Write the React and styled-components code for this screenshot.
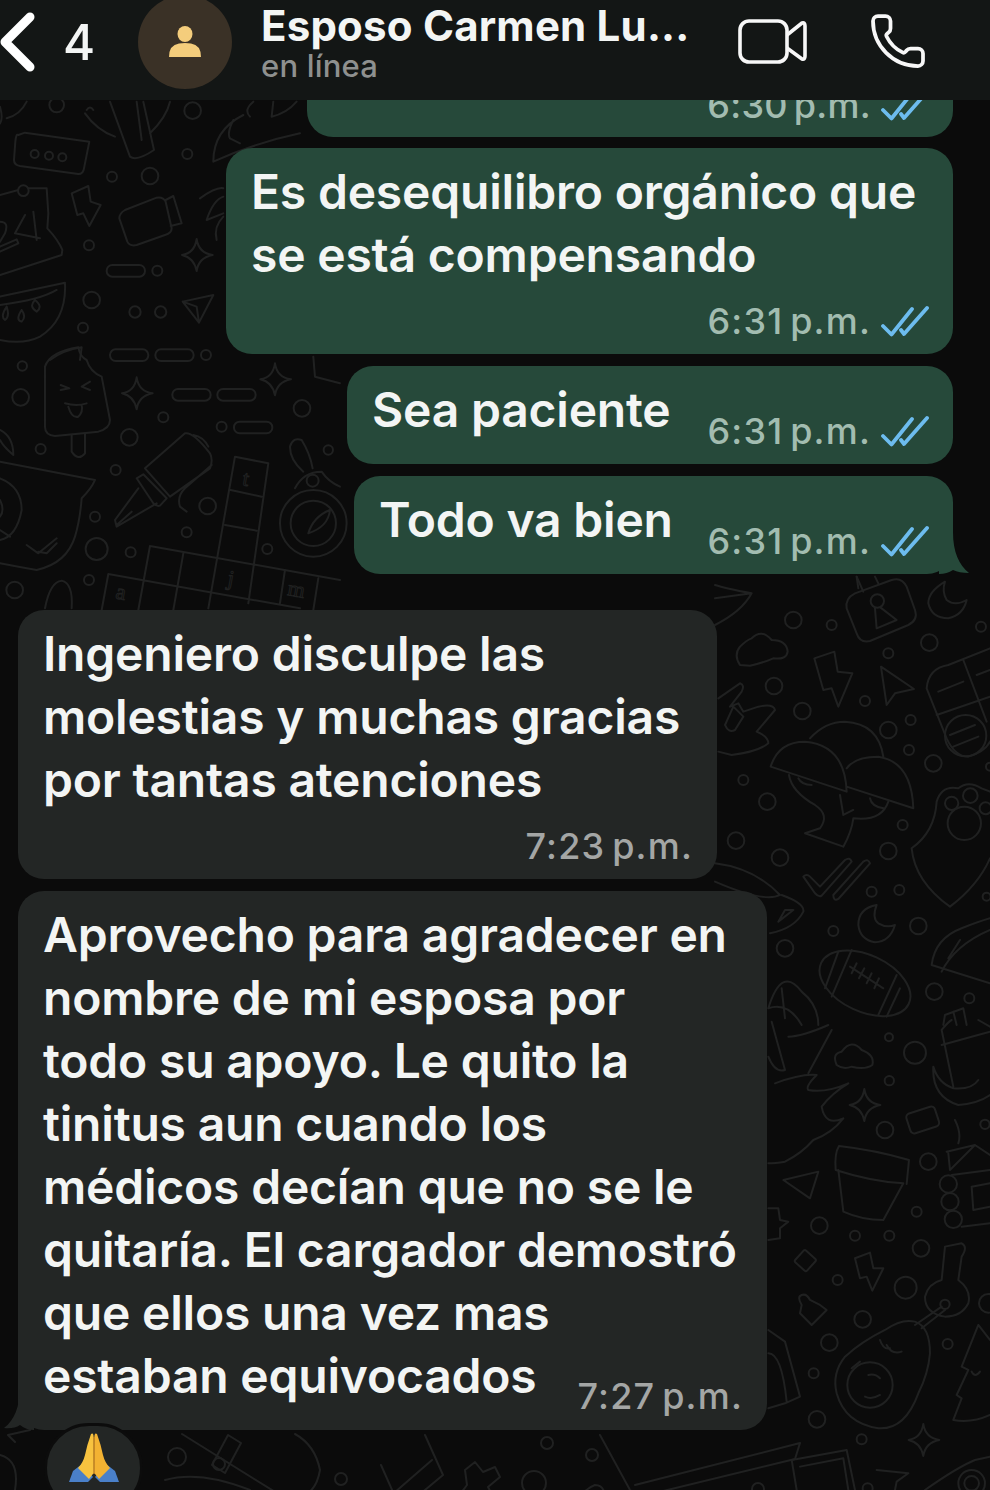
import React from "react";
import styled, { createGlobalStyle } from "styled-components";
import { Phone } from "lucide-react";

const Global = createGlobalStyle`
  html, body { margin: 0; padding: 0; background: #0b0b0b; }
  body { font-family: Inter, "Liberation Sans", sans-serif; }
`;

const Page = styled.div`
  position: relative;
  width: 990px;
  height: 1490px;
  overflow: hidden;
  background: #0b0b0b;
  color: #f3f5f4;
`;

const Wallpaper = styled.svg`
  position: absolute;
  inset: 0;
  width: 990px;
  height: 1490px;
`;

const Header = styled.header`
  position: relative;
  z-index: 2;
  display: flex;
  align-items: flex-start;
  height: 100px;
  background: #131615;
`;

const BackGroup = styled.div`
  display: flex;
  align-items: center;
  width: 138px;
  height: 84px;
`;

const BackCount = styled.span`
  margin-left: 27px;
  font-size: 49px;
  font-weight: 500;
  line-height: 1;
`;

const Avatar = styled.div`
  flex: none;
  display: flex;
  align-items: center;
  justify-content: center;
  width: 94px;
  height: 94px;
  margin-top: -5px;
  border-radius: 50%;
  background: #3a3126;
`;

const Titles = styled.div`
  width: 477px;
  margin-left: 29px;
  padding-top: 3px;
`;

const Title = styled.div`
  font-size: 42px;
  font-weight: 700;
  line-height: 45px;
  letter-spacing: 0.2px;
  white-space: nowrap;
`;

const Status = styled.div`
  font-size: 31px;
  font-weight: 500;
  line-height: 36px;
  color: #8e908f;
  letter-spacing: 0.2px;
`;

const Actions = styled.div`
  display: flex;
  align-items: center;
  gap: 60px;
  height: 82px;
  color: #f7f7f7;
`;

const Chat = styled.main`
  position: relative;
  z-index: 1;
  display: flex;
  flex-direction: column;
  gap: 12px;
  padding: 0 37px 0 18px;
`;

const Bubble = styled.div`
  position: relative;
  box-sizing: border-box;
  width: ${(p) => p.$w}px;
  align-self: ${(p) => (p.$out ? "flex-end" : "flex-start")};
  margin-top: ${(p) => p.$mt || 0}px;
  padding: 12px 24px 20px 25px;
  border-radius: 26px;
  background: ${(p) => (p.$out ? "#26493a" : "#232625")};

  ${(p) =>
    p.$tail &&
    p.$out &&
    `&::after {
      content: "";
      position: absolute;
      right: -16px;
      bottom: 0;
      width: 30px;
      height: 42px;
      background: #26493a;
      clip-path: path("M14 0 C14 20 20 33 30 41 Q20 41 14 38 Q8 42 0 42 L0 0 Z");
    }`}

  ${(p) =>
    p.$tail &&
    !p.$out &&
    `&::after {
      content: "";
      position: absolute;
      left: -14px;
      bottom: 0;
      width: 30px;
      height: 42px;
      background: #232625;
      clip-path: path("M16 0 C16 18 10 33 0 40 Q10 41 16 37 Q22 42 30 42 L30 0 Z");
    }`}
`;

const ClippedBubble = styled.div`
  box-sizing: border-box;
  display: flex;
  justify-content: flex-end;
  align-items: flex-end;
  align-self: flex-end;
  width: 646px;
  height: 37px;
  margin-bottom: -1px;
  padding: 0 24px 14px 0;
  overflow: hidden;
  border-radius: 0 0 26px 26px;
  background: #26493a;
`;

const Body = styled.div`
  font-size: 48px;
  font-weight: 600;
  line-height: 63px;
  letter-spacing: -0.2px;
  white-space: nowrap;
`;

const Meta = styled.div`
  display: flex;
  flex: none;
  align-items: center;
  justify-content: flex-end;
  gap: 10px;
  height: 36px;
  color: ${(p) => (p.$out ? "#a2bcb0" : "#a4a6a5")};
  font-size: 36px;
  font-weight: 500;
  line-height: 36px;
  letter-spacing: 1.2px;
  word-spacing: -4px;
  white-space: nowrap;
`;

const ClippedMeta = styled(Meta)`
  letter-spacing: 0.3px;
`;

const MetaRow = styled(Meta)`
  margin-top: 17px;
  margin-bottom: -5px;
`;

const Inline = styled.div`
  display: flex;
  align-items: flex-end;
  justify-content: space-between;
  margin-bottom: 3px;
`;

const InlineMeta = styled(Meta)`
  margin-bottom: -8px;
`;

const Overlay = styled.div`
  display: grid;
  margin-bottom: 3px;
  & > * {
    grid-area: 1 / 1;
  }
`;

const OverlayMeta = styled(Meta)`
  align-self: end;
  justify-self: end;
  margin-bottom: -7px;
`;

const Reaction = styled.div`
  position: relative;
  z-index: 2;
  align-self: flex-start;
  display: flex;
  justify-content: center;
  box-sizing: border-box;
  width: 99px;
  height: 90px;
  margin: -19px 0 0 26px;
  padding-top: 7px;
  border: 3px solid #0c0c0c;
  border-radius: 48px;
  background: #232625;
`;

const Stroke = styled.g`
  fill: none;
  stroke: #202121;
  stroke-width: ${(p) => p.$sw || 6};
  stroke-linecap: round;
  stroke-linejoin: round;
`;

const Letter = styled.text`
  font-family: "Liberation Serif", serif;
  font-size: 66px;
  fill: none;
  stroke: #202121;
  stroke-width: 3;
`;

const Circles = ({ list }) =>
  list.map(([x, y, r], i) => <circle key={i} cx={x} cy={y} r={r} />);

const Pills = ({ list }) =>
  list.map(([x, y], i) => <rect key={i} x={x} y={y} width="115" height="35" rx="17" />);

const Region = ({ x, y, children }) => (
  <Stroke transform={`translate(${x} ${y}) scale(0.3333)`}>{children}</Stroke>
);

const star = (x, y, s = 1) =>
  `M${x} ${y - 48 * s} Q${x + 6 * s} ${y - 6 * s} ${x + 48 * s} ${y} Q${x + 6 * s} ${y + 8 * s} ${x} ${y + 48 * s} Q${x - 8 * s} ${y + 8 * s} ${x - 44 * s} ${y} Q${x - 6 * s} ${y - 6 * s} ${x} ${y - 48 * s}Z`;

const Doodles = () => (
  <Wallpaper viewBox="0 0 990 1490" aria-hidden="true">
    {/* top left */}
    <Region x={0} y={100}>
      <path d="M55 105 Q48 100 46 125 L42 180 Q42 195 60 198 L235 222 Q250 222 252 205 L268 125 L75 98Z" />
      <Circles list={[[104,162,12],[147,167,12],[187,172,12],[170,15,22],[578,32,25],[562,162,15],[336,230,15],[450,228,25],[267,436,15],[472,512,15],[275,600,25],[405,636,17],[482,636,17],[249,683,15],[70,272,16]]} />
      <path d="M330 5 L390 170 Q410 185 462 150 L430 5 M255 40 Q290 90 345 110 M450 100 Q500 50 510 5 M410 5 L425 120" />
      <path d="M260 30 Q270 15 280 30 M0 20 Q10 55 0 70 M20 55 Q60 45 80 5" />
      <path d="M640 185 Q640 90 730 45 M640 185 Q760 130 900 100 M700 60 Q680 100 690 115 L720 130 M760 5 Q730 30 750 50 M820 5 L815 50 Q860 40 890 5" />
      <path d="M215 280 L265 258 L272 305 L302 315 L268 378 L250 340 L232 345Z" />
      <path d="M358 355 Q358 340 375 330 L470 293 Q490 290 497 305 L515 385 Q515 400 495 405 L410 435 Q390 440 382 425Z M497 300 L520 288 L545 370 L512 378" />
      <path d={star(590, 465, 1)} />
      <path d="M548 605 L640 585 L597 668Z M597 668 L590 620 L548 605" />
      <rect x="320" y="495" width="115" height="35" rx="17" />
      <path d="M0 285 L55 270 M85 265 L140 265 L145 340 L142 385 Q175 420 187 450 L185 465 L0 525 M0 455 L55 430 L50 418 L0 440" />
      <path d="M75 345 L45 400 L120 415 M100 335 L110 420 M0 365 Q28 365 15 400 L0 425" />
      <path d="M195 550 Q200 660 120 710 Q70 735 0 720 M0 590 L195 548 M0 615 Q120 600 170 570 M20 620 Q0 650 15 660 Q30 650 20 620 M65 630 Q45 660 65 665 Q80 650 65 630 M105 600 Q85 620 110 635 Q130 620 105 600" />
      <path d="M600 295 Q650 260 670 265 M620 360 Q640 300 670 290 M620 360 L670 340 M650 420 Q640 380 670 350" />
      <path d="M150 780 Q190 750 245 742 L240 780" />
    </Region>

    {/* left middle */}
    <Region x={0} y={340}>
      <path d="M135 80 Q150 35 235 22 Q240 50 260 60 Q270 95 305 110 L330 240 Q330 265 295 275 L165 288 Q135 285 135 260Z" />
      <path d="M215 285 L215 335 Q235 365 255 340 L255 280 M182 135 L208 145 L182 150 M270 125 L245 140 L270 150 M195 190 Q230 200 260 190 M205 200 Q215 235 235 230 Q250 215 245 195" />
      <Pills list={[[330,28],[466,28],[517,147],[652,147],[702,245]]} />
      <path d={star(410, 160)} />
      <path d={star(825, 118)} />
      <path d="M435 385 L555 280 Q580 275 630 340 Q640 360 630 385 L510 470Z M410 415 L430 403 L500 475 L480 497 Q470 500 460 490Z M415 445 L345 540 L350 560 L470 490 M350 555 L395 515 M580 285 Q610 290 625 320 M635 375 L555 445 Q530 470 540 500 L560 515" />
      <path d="M705 350 L805 370 L745 790 M705 350 L625 805 M692 450 L785 470 M675 555 L770 572 M450 618 L1020 720 M325 702 L305 810 M450 618 L415 810 M550 640 L520 810 M855 690 L840 790 M955 715 L940 810 M325 702 L900 805" />
      <path d="M0 365 L285 420 Q275 445 245 475 Q240 540 225 590 Q200 670 110 690 Q50 680 0 670 M0 415 Q65 440 65 510 Q50 590 0 600 M80 615 L115 640 L170 595 M115 635 L140 640 L170 610 M0 480 Q15 510 0 530 M0 570 L30 590" />
      <path d="M0 270 Q40 290 40 345 Q10 320 0 300" />
      <circle cx="940" cy="550" r="100" />
      <circle cx="940" cy="550" r="68" />
      <path d="M925 580 Q940 530 990 510 Q985 560 925 580Z" />
      <circle cx="938" cy="422" r="18" />
      <path d="M885 445 Q910 395 965 395 Q985 425 1020 440 M870 320 Q880 290 905 300 Q930 340 938 385 M910 395 Q870 360 870 320" />
      <path d="M135 805 Q150 725 185 722 Q220 730 215 805" />
      <path d="M940 50 L945 110 L1020 130" />
      <Circles list={[[67,78,14],[62,172,25],[618,45,15],[906,205,25],[490,232,15],[665,260,15],[388,292,25],[122,327,15],[985,330,14],[347,390,15],[623,498,25],[285,530,15],[560,577,15],[290,627,33],[392,637,15],[802,627,15],[267,720,15],[44,750,25]]} />
      <Letter x="725" y="435" transform="rotate(10 725 435)">t</Letter>
      <Letter x="680" y="735" transform="rotate(10 680 735)">j</Letter>
      <Letter x="345" y="775" transform="rotate(10 345 775)">a</Letter>
      <Letter x="860" y="765" transform="rotate(10 860 765)">m</Letter>
    </Region>

    {/* right top */}
    <Region x={715} y={575}>
      <path d="M395 100 Q390 70 420 55 L530 15 Q560 5 575 35 L600 105 Q610 135 580 150 L465 198 Q435 205 425 175Z" />
      <circle cx="487" cy="78" r="20" />
      <path d="M480 100 L485 160 L545 135 L497 98 M425 5 L445 50 M480 5 L490 25" />
      <path d="M690 20 Q640 50 640 85 Q650 130 700 130 Q745 120 755 75 Q720 95 695 75 Q680 50 690 20Z" />
      <path d="M75 270 Q55 240 75 215 Q95 195 110 190 Q140 160 170 195 Q215 195 218 230 Q215 255 175 250 Q140 265 105 272Z" />
      <path d="M298 250 L358 230 L368 290 L412 295 L370 395 L350 340 L325 345Z" />
      <path d="M498 275 L597 342 L540 355 L515 390Z" />
      <path d="M10 370 L75 325 Q90 330 80 350 L45 395 L70 385 L85 410 L130 395 Q175 385 180 405 L125 470 Q160 485 160 505 Q130 530 50 540 L10 530 M30 450 Q40 475 60 465 L85 425 L55 395Z" />
      <path d="M167 575 Q190 500 270 500 Q390 510 395 650Z M285 490 Q330 440 390 440 Q490 445 505 545 M395 580 Q420 545 490 545 Q590 560 595 700 L395 635" />
      <path d="M222 600 Q230 650 300 690 Q345 720 315 760 L270 775 L385 815 Q410 770 415 730 Q500 740 520 680 M375 660 L385 720 L415 705 M465 670 Q470 695 505 700 M250 610 Q260 630 290 630" />
      <path d="M265 905 Q275 895 285 905 L315 935 L390 855 Q405 845 410 860 L320 962 Q312 968 300 955Z M355 960 L445 860 Q460 850 465 865 L370 972 Q355 980 355 960Z" />
      <path d="M590 820 Q660 770 665 680 Q680 630 730 640 Q760 615 800 640 L825 650 M590 820 Q600 920 705 995 Q790 930 825 850" />
      <circle cx="748" cy="745" r="50" />
      <circle cx="710" cy="685" r="20" />
      <circle cx="766" cy="662" r="22" />
      <circle cx="812" cy="700" r="18" />
      <path d="M635 340 Q640 280 700 270 L825 220 M635 340 L695 490 Q720 545 760 545 Q810 530 825 500 M745 255 L815 440 M665 420 L825 365 M670 350 L745 320 M785 300 L825 285 M705 480 L780 450 M715 515 L790 485" />
      <circle cx="752" cy="482" r="62" />
      <ellipse cx="450" cy="1225" rx="145" ry="85" transform="rotate(25 450 1225)" />
      <path d="M370 1130 L330 1240 M410 1125 L350 1265 M545 1200 L490 1320 M555 1240 L515 1325 M405 1175 L505 1240 M425 1165 L410 1195 M448 1180 L432 1210 M470 1195 L455 1225 M492 1210 L478 1240" />
      <path d="M650 1170 Q660 1090 740 1060 Q790 1040 825 1030 M650 1170 L825 1225 M680 1190 Q720 1110 825 1065 M700 1150 L735 1095" />
      <path d="M0 70 L110 55 Q80 110 0 150 M0 30 Q30 40 110 55" />
      <path d="M0 865 Q120 880 195 960 Q150 985 0 920 M200 960 Q270 985 265 1010 Q240 1060 165 1075 M190 1040 L235 1005 L210 1005Z" />
      <path d="M160 1300 Q200 1170 260 1250 Q310 1290 310 1350 M200 1240 L210 1330 M160 1300 Q220 1280 260 1350" />
      <path d="M430 40 L425 5 M685 1350 L690 1320 L745 1300 L755 1350 M715 1310 L725 1350" />
      <path d="M430 1050 Q430 1000 485 990 Q470 1030 490 1045 Q515 1060 540 1050 Q525 1100 480 1102 Q435 1095 430 1050Z" />
      <Circles list={[[235,135,25],[350,150,15],[643,203,25],[798,155,15],[520,235,15],[177,333,25],[262,408,25],[450,378,15],[587,435,15],[520,465,25],[582,525,15],[655,565,25],[85,615,15],[157,680,25],[63,797,25],[195,848,25],[563,750,15],[520,828,25],[470,950,15],[553,945,15],[355,1068,15],[610,1053,25],[210,1120,25],[658,1250,25],[763,1270,15],[825,575,12],[815,965,12]]} />
    </Region>

    {/* right bottom */}
    <Region x={765} y={1020}>
      <path d="M215 135 Q200 100 230 95 Q260 55 290 90 Q330 105 322 135 Q300 150 260 140 Q235 150 215 135Z" />
      <path d={star(298, 255)} />
      <path d={star(475, 1260)} />
      <path d="M505 140 Q500 230 580 255 Q640 250 675 225 M505 140 Q520 190 565 205 Q620 210 640 180 M530 30 L565 200 M530 30 Q550 5 560 0 M530 75 L675 35 M640 0 L675 20" />
      <rect x="428" y="270" width="90" height="62" rx="12" transform="rotate(-18 470 300)" />
      <path d="M222 378 Q330 390 432 420 L425 492 M222 378 Q208 400 212 450 Q320 485 415 490 M220 450 L235 575 Q290 600 355 600 L415 490" />
      <path d="M55 480 L160 455 L135 535Z" />
      <path d="M570 300 Q590 340 580 370 M545 395 L630 375 L675 405 M550 400 L555 450 L630 375 M560 465 L675 450 M620 500 L625 570 L675 560 M620 500 L675 490 M590 620 L675 610" />
      <circle cx="550" cy="492" r="26" />
      <circle cx="555" cy="545" r="26" />
      <circle cx="565" cy="598" r="26" />
      <path d="M270 715 L315 698 L325 745 L355 745 L322 812 L305 770 L285 775Z" />
      <rect x="97" y="698" width="48" height="48" rx="6" transform="rotate(42 121 722)" />
      <path d="M110 855 Q95 830 110 825 Q125 820 135 840 L165 855 L185 870 L140 915 L105 880Z" />
      <path d="M450 905 Q410 895 360 930 Q290 965 240 1010 Q200 1060 215 1120 Q240 1210 340 1225 Q420 1230 460 1120 Q490 1060 495 1000 Q495 920 450 905Z" />
      <circle cx="315" cy="1095" r="68" />
      <path d="M345 960 Q355 990 375 985 M365 975 Q380 1005 410 995 M300 1130 Q320 1140 345 1125 M310 1065 Q330 1060 345 1075 M260 1045 L285 1025" />
      <path d="M540 680 L590 670 Q610 680 590 710 L580 780 Q620 810 610 850 Q590 890 540 890 Q480 880 480 830 Q490 790 530 780Z M450 915 L530 860 M470 925 L540 870" />
      <circle cx="540" cy="853" r="14" />
      <path d="M640 915 L590 1040 L610 1050 L575 1125 L590 1135 L565 1200 Q620 1210 675 1185 M640 915 L675 960 M620 1055 Q630 1075 645 1055" />
      <path d="M80 1320 L245 1290 L270 1410 M95 1410 L80 1320 M105 1340 L235 1315 L250 1410" />
      <path d="M335 1350 L430 1360 L395 1385 L390 1410 M480 1410 Q580 1340 630 1320 L675 1310" />
      <circle cx="620" cy="1390" r="40" />
      <circle cx="620" cy="1390" r="22" />
      <path d="M20 5 L35 60 L60 150 Q30 160 10 110 M70 50 Q110 50 190 15 M130 160 L200 30" />
      <path d="M30 190 Q110 160 155 165 Q120 200 130 210 Q180 220 250 190 Q200 220 170 260 Q180 320 235 295 Q200 340 145 360 Q110 400 60 425 Q30 430 10 430" />
      <path d="M10 565 L40 565 L45 600 L70 605 L45 625 L45 655 L10 660" />
      <path d="M10 930 L60 965 L105 1130 L60 1150 L10 1165 M10 1000 Q50 1000 65 1145" />
      <Circles list={[[372,52,12],[450,98,33],[373,182,14],[360,330,25],[490,425,25],[455,575,15],[163,617,25],[270,647,15],[373,647,15],[468,685,25],[218,780,15],[422,803,33],[293,898,25],[193,968,25],[548,972,15],[146,1060,15],[156,1198,25],[290,1258,15],[660,313,14],[670,850,28],[308,1405,15]]} />
    </Region>

    {/* bottom strip */}
    <Stroke transform="translate(130 1425)" $sw={2}>
      <path d="M52 9 L150 70 Q184 80 190 45 Q185 20 165 9 M82 40 L98 10 L111 18 L95 48Z" />
      <path d="M251 40 L271 85 L313 50 L295 10 M264 68 L302 35" />
      <path d="M335 45 L345 37 L353 47 L365 42 L370 52 L358 62 L365 75 L355 82 L345 72 L335 80 L328 72 L337 60Z" />
      <path d="M470 10 L500 65 Q510 72 525 68 L665 34 L670 18 L505 60" />
      <path d="M440 92 Q450 65 465 60 Q480 60 472 90" />
      <path d="M620 90 L645 72 L655 90" />
      <Circles list={[[47,32,9],[89,39,6],[39,72,6],[71,73,6],[211,54,6],[238,73,6],[417,18,6],[462,30,6],[404,58,12],[628,64,6],[140,90,8]]} />
    </Stroke>
    <Stroke transform="translate(0 1380)" $sw={2}>
      <path d="M8 55 L30 50 L30 35 M0 75 Q20 80 15 110 M165 100 Q200 90 250 110 M8 55 L15 62" />
    </Stroke>
  </Wallpaper>
);

const Chevron = () => (
  <svg width="36" height="62" viewBox="0 0 36 62" fill="none" style={{ flex: "none" }}>
    <path d="M30 6 L5 31 L30 56" stroke="#fff" strokeWidth="9" strokeLinecap="round" strokeLinejoin="round" />
  </svg>
);

const Person = () => (
  <svg width="32" height="32" viewBox="0 0 32 32">
    <ellipse cx="16" cy="8" rx="7.5" ry="8" fill="#f4cd7c" />
    <path d="M0 31 Q0 19 10 17.5 Q16 16.5 22 17.5 Q32 19 32 31Z" fill="#f4cd7c" />
  </svg>
);

const Video = () => (
  <svg width="70" height="46" viewBox="0 0 70 46" fill="none" stroke="#f7f7f7" strokeWidth="3.6" strokeLinejoin="round">
    <rect x="2" y="3" width="47" height="41" rx="9" />
    <path d="M49 17 L64 5 Q67 4 67 8 V38 Q67 42 64 41 L49 30" />
  </svg>
);

const Checks = () => (
  <svg width="48" height="32" viewBox="0 0 48 32" fill="none" stroke="#6dbcee" strokeWidth="3.8" strokeLinecap="round" strokeLinejoin="round" style={{ flex: "none" }}>
    <path d="M2 21 L10.5 29.5 L31 4" />
    <path d="M20 25 L23 29 L46 3" />
  </svg>
);

const Pray = () => (
  <svg width="52" height="50" viewBox="0 0 52 50">
    <path d="M1 49 L5 38 L14 31 L25 44 L20 49Z" fill="#4a80c9" />
    <path d="M51 49 L47 38 L38 31 L27 44 L32 49Z" fill="#4a80c9" />
    <path d="M23 1 Q25.5 -1 25.6 4 L25.7 40 L21 46 L10 35 Q15 30 17 22 Q19 12 23 1Z" fill="#f8c33f" />
    <path d="M29 1 Q26.5 -1 26.4 4 L26.3 40 L31 46 L42 35 Q37 30 35 22 Q33 12 29 1Z" fill="#f3b232" />
    <path d="M26 4 V41" stroke="#d98f22" strokeWidth="1.2" />
  </svg>
);

const Time = ({ t, out }) => (
  <>
    {t}
    {out && <Checks />}
  </>
);

export default function App() {
  return (
    <Page>
      <Global />
      <Doodles />
      <Header>
        <BackGroup>
          <Chevron />
          <BackCount>4</BackCount>
        </BackGroup>
        <Avatar>
          <Person />
        </Avatar>
        <Titles>
          <Title>Esposo Carmen Lu...</Title>
          <Status>en línea</Status>
        </Titles>
        <Actions>
          <Video />
          <Phone size={60} strokeWidth={1.5} />
        </Actions>
      </Header>
      <Chat>
        <ClippedBubble>
          <ClippedMeta $out>
            <Time t="6:30 p.m." out />
          </ClippedMeta>
        </ClippedBubble>
        <Bubble $out $w={727}>
          <Body>
            Es desequilibro orgánico que
            <br />
            se está compensando
          </Body>
          <MetaRow $out>
            <Time t="6:31 p.m." out />
          </MetaRow>
        </Bubble>
        <Bubble $out $w={606}>
          <Inline>
            <Body>Sea paciente</Body>
            <InlineMeta $out>
              <Time t="6:31 p.m." out />
            </InlineMeta>
          </Inline>
        </Bubble>
        <Bubble $out $tail $w={599}>
          <Inline>
            <Body>Todo va bien</Body>
            <InlineMeta $out>
              <Time t="6:31 p.m." out />
            </InlineMeta>
          </Inline>
        </Bubble>
        <Bubble $w={699} $mt={24}>
          <Body>
            Ingeniero disculpe las
            <br />
            molestias y muchas gracias
            <br />
            por tantas atenciones
          </Body>
          <MetaRow>
            <Time t="7:23 p.m." />
          </MetaRow>
        </Bubble>
        <Bubble $tail $w={749}>
          <Overlay>
            <Body>
              Aprovecho para agradecer en
              <br />
              nombre de mi esposa por
              <br />
              todo su apoyo. Le quito la
              <br />
              tinitus aun cuando los
              <br />
              médicos decían que no se le
              <br />
              quitaría. El cargador demostró
              <br />
              que ellos una vez mas
              <br />
              estaban equivocados
            </Body>
            <OverlayMeta>
              <Time t="7:27 p.m." />
            </OverlayMeta>
          </Overlay>
        </Bubble>
        <Reaction>
          <Pray />
        </Reaction>
      </Chat>
    </Page>
  );
}
